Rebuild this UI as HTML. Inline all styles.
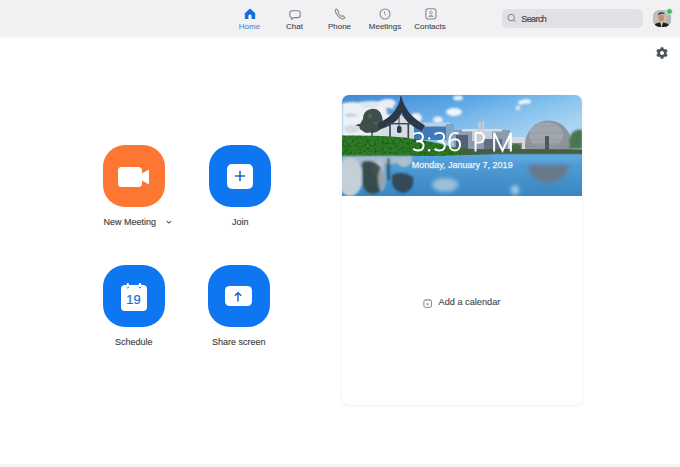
<!DOCTYPE html>
<html><head><meta charset="utf-8">
<style>
*{margin:0;padding:0;box-sizing:border-box}
html,body{width:680px;height:467px;overflow:hidden;background:#fff;font-family:"Liberation Sans",sans-serif}
.abs{position:absolute}
#hdr{position:absolute;left:0;top:0;width:680px;height:36px;background:#f1f1f4}
#hdrsh{position:absolute;left:0;top:36px;width:680px;height:4px;background:linear-gradient(#f4f4f8,#fff)}
.nav{position:absolute;top:0;width:50px;height:36px;text-align:center}
.nav .lbl{position:absolute;left:0;width:50px;top:22px;font-size:8px;line-height:9px;color:#444448;text-align:center;-webkit-text-stroke:0.1px currentColor}
.nav svg{position:absolute;top:8px;left:19px}
#search{position:absolute;left:502px;top:8.5px;width:141px;height:19.5px;border-radius:5px;background:#e1e1e5}
#search .t{position:absolute;left:19.3px;top:5px;font-size:9px;line-height:10px;color:#4a4a4e;letter-spacing:-0.6px;-webkit-text-stroke:0.2px #4a4a4e}
.btn{position:absolute;width:62px;height:62px;border-radius:22px}
.blbl{position:absolute;font-size:9px;line-height:10px;color:#444448;white-space:nowrap;-webkit-text-stroke:0.15px #444448}
#card{position:absolute;left:341.5px;top:94.5px;width:240.5px;height:310px;border-radius:7px;background:#fff;box-shadow:0 1px 3px rgba(0,0,0,.06),0 0 1px rgba(0,0,0,.05);overflow:hidden}
#bottom{position:absolute;left:0;top:464px;width:680px;height:3px;background:#f3f3f3}
</style></head><body>
<div id="hdr"></div>
<div id="hdrsh"></div>

<!-- nav: Home -->
<div class="nav" style="left:224.5px">
  <svg width="12" height="12" viewBox="0 0 12 12" style="left:19px;top:8px"><path d="M6 0.6 L11.2 5.2 V11 H7.6 V8 Q7.6 6.6 6 6.6 Q4.4 6.6 4.4 8 V11 H0.8 V5.2 Z" fill="#0e6fe0"/></svg>
  <div class="lbl" style="color:#4a8ad8">Home</div>
</div>
<!-- Chat -->
<div class="nav" style="left:269.5px">
  <svg width="12" height="12" viewBox="0 0 12 12" style="left:19px;top:9.6px"><path d="M3 0.8 H9 Q11.2 0.8 11.2 3 V5.4 Q11.2 7.6 9 7.6 H4.8 L2.6 9.4 V7.5 Q0.8 7.2 0.8 5.4 V3 Q0.8 0.8 3 0.8 Z" fill="none" stroke="#808084" stroke-width="1.05" stroke-linejoin="round"/></svg>
  <div class="lbl">Chat</div>
</div>
<!-- Phone -->
<div class="nav" style="left:314.5px">
  <svg width="12" height="12" viewBox="0 0 12 12" style="left:19.5px;top:8.3px"><path d="M2.4 1 Q1.2 1.4 1.2 2.8 Q1.6 6.2 5 9.2 Q7.4 11.2 9.4 10.8 Q10.6 10.5 10.8 9.6 L9 7.7 L7.5 8.4 Q5.6 7.4 4 5 L4.6 3.4 Z" fill="none" stroke="#858589" stroke-width="1.1" stroke-linejoin="round"/></svg>
  <div class="lbl">Phone</div>
</div>
<!-- Meetings -->
<div class="nav" style="left:360px">
  <svg width="12" height="12" viewBox="0 0 12 12" style="left:19px;top:8px"><circle cx="6" cy="6" r="5" fill="none" stroke="#8a8a8e" stroke-width="1.1"/><path d="M5.6 3.4 V6.2 L7 7.4" fill="none" stroke="#8a8a8e" stroke-width="0.9"/></svg>
  <div class="lbl">Meetings</div>
</div>
<!-- Contacts -->
<div class="nav" style="left:405px">
  <svg width="12" height="12" viewBox="0 0 12 12" style="left:19.5px;top:8px"><rect x="0.8" y="0.8" width="10.2" height="10.2" rx="2.4" fill="none" stroke="#8a8a8e" stroke-width="1.1"/><circle cx="5.9" cy="4.4" r="1.3" fill="none" stroke="#8a8a8e" stroke-width="0.8"/><path d="M3.6 8.4 Q5.9 5.8 8.2 8.4 Z" fill="none" stroke="#8a8a8e" stroke-width="0.8"/></svg>
  <div class="lbl">Contacts</div>
</div>

<div id="search">
  <svg class="abs" width="11" height="11" viewBox="0 0 11 11" style="left:4.5px;top:4.5px"><circle cx="4.2" cy="4.5" r="3.3" fill="none" stroke="#808084" stroke-width="1"/><path d="M6.6 7 L8.6 9" stroke="#808084" stroke-width="1"/></svg>
  <div class="t">Search</div>
</div>

<!-- avatar -->
<div class="abs" style="left:653px;top:9.5px;width:17.5px;height:17.5px;border-radius:7px;overflow:hidden;background:#c9c2bc">
  <svg width="18" height="18" viewBox="0 0 18 18"><rect width="18" height="18" fill="#c6bdb4"/><rect x="0" y="0" width="18" height="7" fill="#bfbcbc"/><rect x="13" y="4" width="5" height="10" fill="#b8b4b2"/><ellipse cx="8.2" cy="8" rx="2.8" ry="3.6" fill="#c4906a"/><path d="M5 5.6 Q8 2 11.6 4.4 L11 3 Q8 1.4 5.4 3.6Z" fill="#1e2a30"/><path d="M0 18 Q1 12.5 8.5 12.2 Q16 12.5 18 18 Z" fill="#172222"/><path d="M7.3 12 L8.6 18 L9.9 12 Z" fill="#d8d8d8"/></svg>
</div>
<div class="abs" style="left:665.6px;top:7.6px;width:7px;height:7px;border-radius:50%;background:#36bd5c;border:0.8px solid #e6f4e8"></div>

<!-- gear -->
<svg class="abs" width="14" height="14" viewBox="0 0 14 14" style="left:654.6px;top:46px">
  <path d="M4.90 3.36 L5.71 2.79 L5.91 1.40 L8.09 1.40 L8.29 2.79 L9.10 3.36 L10.00 3.78 L11.30 3.26 L12.39 5.14 L11.29 6.01 L11.20 7.00 L11.29 7.99 L12.39 8.86 L11.30 10.74 L10.00 10.22 L9.10 10.64 L8.29 11.21 L8.09 12.60 L5.91 12.60 L5.71 11.21 L4.90 10.64 L4.00 10.22 L2.70 10.74 L1.61 8.86 L2.71 7.99 L2.80 7.00 L2.71 6.01 L1.61 5.14 L2.70 3.26 L4.00 3.78 Z" fill="#4a5156" stroke="#4a5156" stroke-width="0.5" stroke-linejoin="round"/>
  <circle cx="7" cy="7" r="2" fill="#fff"/>
</svg>

<!-- buttons -->
<div class="btn" style="left:103px;top:145px;background:#fd7732">
  <svg class="abs" width="34" height="22" viewBox="0 0 34 22" style="left:14px;top:20.5px"><rect x="1" y="1" width="24" height="20" rx="3.5" fill="#fff"/><path d="M24 8 L32 3.5 V18.5 L24 14 Z" fill="#fff"/></svg>
</div>
<div class="btn" style="left:209px;top:145px;background:#0f76f2">
  <div class="abs" style="left:17.5px;top:18.5px;width:26.5px;height:25.5px;border-radius:5px;background:#fff"></div>
  <svg class="abs" width="12" height="12" viewBox="0 0 12 12" style="left:25px;top:25px"><path d="M6 1 V11 M1 6 H11" stroke="#1f68c0" stroke-width="1.6"/></svg>
</div>
<div class="btn" style="left:103px;top:265px;background:#0f76f2">
  <div class="abs" style="left:17.5px;top:20px;width:26px;height:25.5px;border-radius:4px;background:#fff"></div>
  <svg class="abs" width="26" height="10" viewBox="0 0 26 10" style="left:17.5px;top:16.5px"><rect x="5.6" y="1" width="2.4" height="4" rx="1.2" fill="#fff"/><rect x="17.8" y="1" width="2.4" height="4" rx="1.2" fill="#fff"/><path d="M5.4 4.8 Q6.8 7.4 8.2 4.8" fill="none" stroke="#0f76f2" stroke-width="0.9"/><path d="M17.6 4.8 Q19 7.4 20.4 4.8" fill="none" stroke="#0f76f2" stroke-width="0.9"/></svg>
  <div class="abs" style="left:17.5px;top:28px;width:26px;text-align:center;font-size:13px;line-height:13px;color:#1a6cd0;-webkit-text-stroke:0.2px #1a6cd0">19</div>
</div>
<div class="btn" style="left:208px;top:265px;background:#0f76f2">
  <div class="abs" style="left:16.5px;top:21px;width:27.5px;height:20.3px;border-radius:4.5px;background:#fff"></div>
  <svg class="abs" width="10" height="12" viewBox="0 0 10 12" style="left:25px;top:25.8px"><path d="M5 1.8 V10.4 M1.8 4.8 L5 1.6 L8.2 4.8" fill="none" stroke="#1f68c0" stroke-width="1.5"/></svg>
</div>

<div class="blbl" style="left:103.5px;top:216.5px">New Meeting</div>
<svg class="abs" width="8" height="6" viewBox="0 0 8 6" style="left:165px;top:218.5px"><path d="M1.7 2.2 L3.9 4.1 L6.1 2.2" fill="none" stroke="#555" stroke-width="1.05"/></svg>
<div class="blbl" style="left:232px;top:216.5px">Join</div>
<div class="blbl" style="left:115px;top:336.5px">Schedule</div>
<div class="blbl" style="left:212px;top:336.5px">Share screen</div>

<div id="card">
  <svg id="photo" class="abs" width="240.5" height="101.5" viewBox="0 0 240.5 101.5" style="left:0;top:0">
  <defs>
    <linearGradient id="sky" x1="0" y1="0" x2="1" y2="0.35">
      <stop offset="0" stop-color="#3e88d2"/><stop offset="0.45" stop-color="#50a0e4"/><stop offset="0.8" stop-color="#7cbcec"/><stop offset="1" stop-color="#96caf0"/>
    </linearGradient>
    <linearGradient id="skyv" x1="0" y1="0" x2="0" y2="1">
      <stop offset="0" stop-color="#fff" stop-opacity="0"/><stop offset="1" stop-color="#dff0fb" stop-opacity="0.45"/>
    </linearGradient>
    <linearGradient id="water" x1="0" y1="0" x2="0" y2="1">
      <stop offset="0" stop-color="#58a2dc"/><stop offset="1" stop-color="#3786c2"/>
    </linearGradient>
    <filter id="b1" x="-30%" y="-30%" width="160%" height="160%"><feGaussianBlur stdDeviation="1"/></filter>
    <filter id="b2" x="-30%" y="-30%" width="160%" height="160%"><feGaussianBlur stdDeviation="2"/></filter>
    <filter id="b3" x="-30%" y="-30%" width="160%" height="160%"><feGaussianBlur stdDeviation="3"/></filter>
    <filter id="b05" x="-10%" y="-10%" width="120%" height="120%"><feGaussianBlur stdDeviation="0.45"/></filter>
    <filter id="gtex" x="0" y="0" width="100%" height="100%" color-interpolation-filters="sRGB"><feTurbulence type="fractalNoise" baseFrequency="0.4" numOctaves="2" seed="5" result="n"/><feColorMatrix in="n" type="matrix" values="0 0 0 0 0.1  0 0 0 0 0.33  0 0 0 0 0.09  0 0 0 -2.6 1.45" result="c"/><feGaussianBlur in="c" stdDeviation="0.4" result="cb"/><feComposite in="cb" in2="SourceGraphic" operator="in"/></filter>
    <clipPath id="dc"><rect x="0" y="0" width="240.5" height="55"/></clipPath>
  </defs>
  <rect width="240.5" height="62" fill="url(#sky)"/>
  <rect width="240.5" height="62" fill="url(#skyv)"/>
  <!-- clouds left -->
  <g filter="url(#b1)">
    <path d="M0 8.5 Q8 6 16 7.5 Q26 5 36 6.5 Q46 5 50 9 Q54 13 48 17 Q54 21 50 26 Q56 32 52 40 L40 44 L0 44 Z" fill="#eef2f6"/>
    <path d="M3 19 Q10 17.5 17 20 Q11 22.5 4 21.5 Z" fill="#b4cce4"/>
    <path d="M44 12 Q50 12 55 18 Q50 22 45 19 Z" fill="#5a9ad8"/>
    <ellipse cx="10" cy="34" rx="8" ry="4" fill="#d2dae4"/>
    <ellipse cx="28" cy="10" rx="10" ry="3" fill="#dde5ee"/>
    <ellipse cx="40" cy="38" rx="10" ry="4" fill="#d8e0e8"/>
  </g>
  <g filter="url(#b1)">
    <ellipse cx="46" cy="8" rx="8" ry="4" fill="#e8eef4"/>
    <ellipse cx="74" cy="23" rx="6" ry="5" fill="#eef2f6"/>
    <ellipse cx="96" cy="25" rx="5" ry="3.5" fill="#e8eef4"/>
    <ellipse cx="112" cy="17" rx="8" ry="4" fill="#f2f6fa"/>
    <ellipse cx="116" cy="3" rx="5" ry="2.5" fill="#e8f0f8"/>
    <ellipse cx="184" cy="6.5" rx="5" ry="2.2" fill="#f2f6fa"/><ellipse cx="179" cy="7.5" rx="3" ry="2" fill="#f2f6fa"/>
    <ellipse cx="176" cy="13" rx="2.2" ry="2" fill="#f2f6fa"/>
  </g>
  <!-- tree left -->
  <g filter="url(#b05)">
    <path d="M25 15.5 Q30 12.5 35 14.5 Q40 17.5 40.5 24 Q42.5 30 38.5 34.5 Q33 39 28 37.5 Q23 39 20 35.5 Q16 33.5 18 30 Q19 26.5 21 24 Q21 18 25 15.5 Z" fill="#3e504a"/>
    <path d="M20 31 Q15 31.5 13.5 30.5 Q16 28.5 20 28.5 Z" fill="#3e504a"/>
    <ellipse cx="28" cy="21" rx="2.2" ry="2" fill="#60726a" opacity="0.6"/>
    <ellipse cx="34" cy="28" rx="2" ry="1.8" fill="#5a6c64" opacity="0.6"/>
  </g>
  <rect x="29.3" y="33" width="1.3" height="10" fill="#34423c"/>
  <!-- pagoda walls -->
  <path d="M40 44 V30 Q50 24 58 20 Q66 24 80 33 V44 Z" fill="#d4dce4" filter="url(#b05)"/>
  <!-- blue building -->
  <g filter="url(#b05)">
    <rect x="72" y="30" width="38" height="15" fill="#3c7ab6"/>
    <rect x="74" y="27.5" width="34" height="4" fill="#b8d0e4"/>
    <rect x="104" y="29" width="8" height="17" fill="#7ea4c8"/>
    <rect x="112" y="35" width="56" height="20" fill="#8c9cae"/>
    <rect x="114" y="40" width="12" height="15" fill="#50647a"/>
    <rect x="130" y="36" width="20" height="10" fill="#c4ccd6"/>
    <rect x="142" y="44" width="18" height="11" fill="#5e6e80"/>
    <rect x="120" y="34" width="40" height="2.5" fill="#d4dce4"/>
    <rect x="136.5" y="26.5" width="2.5" height="9" fill="#c0ccd8"/>
    <rect x="140" y="26.5" width="2.5" height="9" fill="#c0ccd8"/>
    <rect x="166" y="42" width="17" height="13" fill="#d2d8de"/>
    <rect x="170" y="48" width="10" height="7" fill="#6a8a6a"/>
  </g>
  <!-- pagoda roof -->
  <g filter="url(#b05)">
    <path d="M59 1.5 Q56.5 12 50.5 18.5 Q44 25 35.5 28.5 L37.5 34.5 Q48 31.5 55 25 Q58.5 21 59.5 17.5 Q61.5 23 66 27.5 Q72 32.5 79.5 36 L83 30.5 Q73 24.5 67 17.5 Q62 10.5 59 1.5 Z" fill="#2c3846"/>
    <rect x="58.3" y="1.5" width="1.4" height="4" fill="#2a3644"/>
    <rect x="47.2" y="28" width="1.6" height="16" fill="#34404a"/>
    <rect x="65.5" y="28" width="1.6" height="16" fill="#34404a"/>
    <rect x="44" y="28" width="26" height="1.4" fill="#3a4650"/>
    <rect x="56.5" y="19" width="1" height="12" fill="#3a4650"/>
    <rect x="55" y="31" width="4.5" height="7" rx="1.8" fill="#2e3a44"/>
  </g>
  <!-- dome -->
  <g filter="url(#b05)" clip-path="url(#dc)">
    <ellipse cx="206.5" cy="50" rx="23.5" ry="24.5" fill="#8f959e"/>
    <ellipse cx="204" cy="40" rx="17" ry="13" fill="#a4aab2" opacity="0.8"/>
    <rect x="184" y="48" width="45" height="7" fill="#8a929c" opacity="0.6"/>
    <rect x="203" y="41" width="4" height="14" fill="#4a5a50"/>
  </g>
  <g stroke="#7c848e" stroke-width="0.5" fill="none" opacity="0.35" clip-path="url(#dc)">
    <path d="M184 45 H229 M186 38 H227 M191 31 H222 M198 27 H214 M183 51 H230"/>
  </g>
  <!-- right tree -->
  <path d="M228 54 Q226 44 230 38 Q235 33 240.5 35 V54 Z" fill="#4a7450" filter="url(#b1)"/>
  <ellipse cx="174" cy="52" rx="5" ry="3" fill="#4a6a48" filter="url(#b05)"/>
  <!-- grass -->
  <path d="M0 40.5 Q40 40 62 42.5 Q90 46 110 52 Q130 55 150 54.5 L240.5 55 V62 L0 62 Z" fill="#2f7c28" filter="url(#b05)"/>
  <path d="M0 40.5 Q40 40 62 42.5 Q90 46 110 52 Q130 55 150 54.5 L240.5 55 V62 L0 62 Z" fill="#2f7c28" filter="url(#gtex)"/>
  <path d="M118 53.5 Q135 54.5 150 54 L240.5 54.5 V59.5 L118 59.5 Z" fill="#4a5c40" filter="url(#b05)"/>
  <!-- water -->
  <path d="M0 61.7 L100 60.8 L150 59.3 L240.5 59.2 V101.5 H0 Z" fill="url(#water)"/>
  <g filter="url(#b1)">
    <path d="M0 61 H70 V68 Q35 70 0 68 Z" fill="#a8bccc"/>
    <ellipse cx="8" cy="82" rx="13" ry="19" fill="#c4d0d8"/>
    <ellipse cx="36" cy="74" rx="7" ry="8" fill="#b8c8d4"/>
    <path d="M20 67 Q27 64 34 68 Q43 74 42 88 Q39 99 30 99 Q21 97 20 86 Z" fill="#34443f" opacity="0.9"/>
    <ellipse cx="40" cy="84" rx="4" ry="12" fill="#a8b8c4" opacity="0.8"/>
    <rect x="45.5" y="63" width="2" height="22" fill="#2e3e44"/>
    <path d="M50 80 Q60 75 71 82 Q73 95 62 98 Q52 97 50 88 Z" fill="#2e3c44" opacity="0.85"/>
    <ellipse cx="62" cy="68" rx="6" ry="4" fill="#b0c0cc"/>
  </g>
  <g filter="url(#b2)">
    <ellipse cx="103" cy="90" rx="13" ry="7" fill="#9cc0dc"/>
    <path d="M186 70 H227 Q224 86 206 88 Q188 86 186 70 Z" fill="#68788a"/>
    <ellipse cx="173" cy="95" rx="4" ry="5" fill="#a8cce8"/>
    <rect x="150" y="60" width="90" height="6" fill="#6ab0e4" opacity="0.5"/>
  </g>
  <!-- time -->
  <g fill="none" stroke="#fff" stroke-width="1.95" stroke-linejoin="miter">
    <path d="M71.50 39.50 C72.60 38.20 74.40 37.85 76.20 37.85 C79.20 37.85 80.90 39.70 80.90 41.90 C80.90 44.50 78.90 46.20 75.80 46.20 H74.20 M75.80 46.20 C79.50 46.20 81.60 48.20 81.60 50.80 C81.60 53.70 79.30 55.40 76.00 55.40 C73.90 55.40 72.30 54.80 71.30 53.80 M92.70 39.50 C93.80 38.20 95.60 37.85 97.40 37.85 C100.40 37.85 102.10 39.70 102.10 41.90 C102.10 44.50 100.10 46.20 97.00 46.20 H95.40 M97.00 46.20 C100.70 46.20 102.80 48.20 102.80 50.80 C102.80 53.70 100.50 55.40 97.20 55.40 C95.10 55.40 93.50 54.80 92.50 53.80 M116.60 38.40 Q115.10 37.85 113.30 37.85 C109.10 37.85 107.25 41.70 107.25 47.50 C107.25 52.70 109.30 55.40 112.60 55.40 C115.90 55.40 118.05 53.10 118.05 49.70 C118.05 46.50 116.10 44.30 112.90 44.30 C110.10 44.30 107.70 46.30 107.35 48.90 M133.55 56.40 V37.85 H137.60 C140.80 37.85 141.95 39.90 141.95 42.50 C141.95 45.50 140.20 47.50 137.40 47.50 H133.55 M152.15 56.40 V37.85 L160.50 55.60 L168.85 37.85 V56.40"/>
  </g>
  <circle cx="87.2" cy="43.50" r="1.2" fill="#fff"/><circle cx="87.2" cy="55.20" r="1.2" fill="#fff"/>
  <text x="120.2" y="72.5" text-anchor="middle" font-family="Liberation Sans" font-size="9" fill="#eef4f6" stroke="#eef4f6" stroke-width="0.25">Monday, January 7, 2019</text>
</svg>
  <svg class="abs" width="10" height="10" viewBox="0 0 10 10" style="left:81px;top:204px"><rect x="0.9" y="0.9" width="7.6" height="7.4" rx="1.4" fill="none" stroke="#7a7a7e" stroke-width="0.9"/><path d="M3 0.4 V2 M6.4 0.4 V2" stroke="#7a7a7e" stroke-width="0.8"/><path d="M4.7 3.6 V6.6 M3.2 5.1 H6.2" stroke="#8a8a8e" stroke-width="0.7"/></svg>
  <div class="abs" style="left:97px;top:202.5px;font-size:9.2px;line-height:10px;color:#46464a;white-space:nowrap;-webkit-text-stroke:0.12px #46464a">Add a calendar</div>
</div>
<div id="bottom"></div>
</body></html>
